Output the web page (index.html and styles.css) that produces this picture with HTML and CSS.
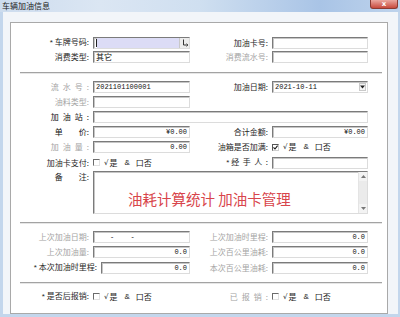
FILE: index.html
```html
<!DOCTYPE html>
<html lang="zh-CN">
<head>
<meta charset="utf-8">
<title>车辆加油信息</title>
<link rel="stylesheet" href="styles.css">
</head>
<body>
<div class="window">
  <div class="titlebar">
    <span class="title">车辆加油信息</span>
    <span class="close">x</span>
  </div>
  <div class="client">
    <div class="panel">
      <div class="rows">
        <div class="row">
          <span class="lbl"><span class="star">*</span> 车牌号码:</span>
          <div class="inp inp-sel"><span class="caret"></span><span class="fill"></span><span class="pick"><svg width="8" height="9" viewBox="0 0 8 9"><path d="M2.5 1.5V7H6.5" fill="none" stroke="#333" stroke-width="1"/><path d="M5.5 5.5L7 7L5.5 8.5" fill="none" stroke="#333" stroke-width="0.8"/></svg></span></div>
          <span class="lbl">加油卡号:</span>
          <div class="inp"></div>
        </div>
        <div class="row">
          <span class="lbl">消费类型:</span>
          <div class="inp cjk">其它</div>
          <span class="lbl dim">消费流水号:</span>
          <div class="inp"></div>
        </div>
      </div>

      <div class="sep sep1"></div>

      <div class="rows">
        <div class="row">
          <span class="lbl dim"><span class="sp4">流水号</span>:</span>
          <div class="inp">2021101100001</div>
          <span class="lbl">加油日期:</span>
          <div class="inp"><span class="grow">2021-10-11</span><span class="drop"><svg width="5" height="4" viewBox="0 0 5 4"><path d="M0 0.5H5L2.5 3.5Z" fill="#222"/></svg></span></div>
        </div>
        <div class="row">
          <span class="lbl dim">油料类型:</span>
          <div class="inp"></div>
        </div>
        <div class="row">
          <span class="lbl strong"><span class="sp4">加油站</span>:</span>
          <div class="inp span3"></div>
        </div>
        <div class="row">
          <span class="lbl strong"><span class="sp16">单</span>价:</span>
          <div class="inp num">¥0.00</div>
          <span class="lbl">合计金额:</span>
          <div class="inp num">¥0.00</div>
        </div>
        <div class="row">
          <span class="lbl dim"><span class="sp4">加油量</span>:</span>
          <div class="inp num">0.00</div>
          <span class="lbl">油箱是否加满:</span>
          <div class="chk"><span class="box on"><svg width="5" height="5" viewBox="0 0 5 5"><path d="M0.5 2.3L2 4L4.6 0.6" fill="none" stroke="#111" stroke-width="1.1"/></svg></span><span class="ck">√</span>是<span class="amp">&amp;</span>口否</div>
        </div>
        <div class="row">
          <span class="lbl">加油卡支付:</span>
          <div class="chk"><span class="box"></span><span class="ck">√</span>是<span class="amp">&amp;</span>口否</div>
          <span class="lbl"><span class="star">*</span> <span class="sp3">经手人</span>:</span>
          <div class="inp"></div>
        </div>
        <div class="row row-memo">
          <span class="lbl lbl-top"><span class="sp16">备</span>注:</span>
          <div class="memo span3">
            <div class="memo-text">油耗计算统计 加油卡管理</div>
            <div class="scroll">
              <span class="sbtn"><svg width="5" height="3" viewBox="0 0 5 3"><path d="M0 3H5L2.5 0Z" fill="#777"/></svg></span>
              <span class="strack"></span>
              <span class="sbtn"><svg width="5" height="3" viewBox="0 0 5 3"><path d="M0 0H5L2.5 3Z" fill="#777"/></svg></span>
            </div>
          </div>
        </div>
      </div>

      <div class="sep sep2"></div>

      <div class="rows">
        <div class="row">
          <span class="lbl dim">上次加油日期:</span>
          <div class="inp"><span class="mask">-&nbsp;&nbsp;-</span></div>
          <span class="lbl dim">上次加油时里程:</span>
          <div class="inp num">0.0</div>
        </div>
        <div class="row">
          <span class="lbl dim">上次加油量:</span>
          <div class="inp num">0.0</div>
          <span class="lbl dim">上次百公里油耗:</span>
          <div class="inp num">0.0</div>
        </div>
        <div class="row">
          <div class="pair">
            <span class="lbl"><span class="star">*</span> 本次加油时里程:</span>
            <div class="inp num">0.0</div>
          </div>
          <span class="lbl dim">本次百公里油耗:</span>
          <div class="inp num">0.0</div>
        </div>
      </div>

      <div class="sep sep3"></div>

      <div class="rows">
        <div class="row">
          <span class="lbl"><span class="star">*</span> 是否后报销:</span>
          <div class="chk"><span class="box"></span><span class="ck">√</span>是<span class="amp">&amp;</span>口否</div>
          <span class="lbl dim"><span class="sp4">已报销</span>:</span>
          <div class="chk"><span class="box"></span><span class="ck">√</span>是<span class="amp">&amp;</span>口否</div>
        </div>
      </div>
    </div>
  </div>
</div>
</body>
</html>
```

FILE: styles.css
```css
* { box-sizing: border-box; margin: 0; padding: 0; }
html, body { width: 400px; height: 317px; overflow: hidden; }
body {
  font-family: "Noto Sans CJK SC", "Noto Sans", sans-serif;
  font-size: 8px;
  color: #222;
  background: #fff;
}
.window {
  width: 400px;
  height: 317px;
  display: flex;
  flex-direction: column;
  background: #c3d6ec;
}
.titlebar {
  height: 12px;
  flex: none;
  display: flex;
  justify-content: space-between;
  align-items: flex-start;
  background: linear-gradient(90deg, #cddcee 0%, #dbe6f3 25%, #cfdff0 50%, #a9c4e6 80%, #bed3ec 100%);
}
.title {
  font-size: 8px;
  line-height: 11px;
  padding-left: 2px;
  color: #1a1a1a;
}
.close {
  width: 28px;
  height: 9px;
  margin-right: 2px;
  background: linear-gradient(#eba79f, #c84a3d);
  border: 1px solid #8c3b33;
  border-top: none;
  border-radius: 0 0 3px 3px;
  color: #fff;
  font: bold 7px/8px "DejaVu Sans", sans-serif;
  text-align: center;
}
.client {
  flex: 1;
  margin: 0 2px 3px 3px;
  background: #f2f5f9;
  padding: 10px 10px 0 7px;
}
.panel {
  width: 378px;
  background: #fff;
  border: 1px solid #a9a9a9;
  padding: 13px 0 11px 0;
}
.rows {
  display: flex;
  flex-direction: column;
  gap: 3px;
}
.row {
  display: grid;
  grid-template-columns: 80px 97px 78px 96px;
  column-gap: 2px;
  height: 12px;
  align-items: center;
}
.row-memo { height: 43px; }
.lbl {
  text-align: right;
  padding-right: 2px;
  white-space: nowrap;
  line-height: 12px;
  color: #262626;
}
.lbl-top { align-self: start; line-height: 11px; }
.strong { color: #111; }
.dim { color: #a4a4a4; }
.star { font-family: "Liberation Sans", sans-serif; font-size: 8px; }
.sp4 { letter-spacing: 4px; }
.sp3 { letter-spacing: 3.5px; }
.sp16 { letter-spacing: 16px; }

.inp {
  height: 12px;
  border: 1px solid;
  border-color: #7b7b7b #dcdcdc #dcdcdc #7b7b7b;
  box-shadow: inset 1px 1px 0 #c6c6c6;
  background: #fff;
  font: 7px/10px "Liberation Mono", monospace;
  color: #111;
  padding: 0 2px;
  display: flex;
  align-items: center;
  overflow: hidden;
  white-space: nowrap;
}
.cjk { font: 8px/10px "Noto Sans CJK SC", sans-serif; }
.num { justify-content: flex-end; }
.span3 { grid-column: 2 / 5; }
.grow { flex: 1; }
.mask { padding-left: 14px; letter-spacing: 0; word-spacing: 4px; }

.inp-sel { padding: 0; background: #fff; }
.caret { width: 1px; height: 8px; background: #222; margin-left: 2px; flex: none; }
.fill { flex: 1; height: 100%; background: #dcdcf6; }
.pick {
  width: 10px;
  height: 100%;
  flex: none;
  background: #ececec;
  border-left: 1px solid #c8c8c8;
  display: flex;
  align-items: center;
  justify-content: center;
}
.drop {
  width: 7px;
  height: 8px;
  flex: none;
  border: 1px solid #c9c9c9;
  background: #f4f4f4;
  display: flex;
  align-items: center;
  justify-content: center;
  margin-right: -1px;
}

.pair {
  grid-column: 1 / 3;
  display: grid;
  grid-template-columns: 1fr 89px;
  column-gap: 3px;
  align-items: center;
}
.pair .lbl { padding-right: 1px; }

.chk {
  display: flex;
  align-items: center;
  height: 12px;
  white-space: nowrap;
  color: #222;
  line-height: 10px;
}
.box {
  width: 7px;
  height: 7px;
  flex: none;
  border: 1px solid;
  border-color: #6b6b6b #e2e2e2 #e2e2e2 #6b6b6b;
  background: #fff;
  margin-right: 4px;
  display: flex;
  align-items: center;
  justify-content: center;
}
.box.on { border-color: #555 #cfcfcf #cfcfcf #555; }
.ck { font: 7px/10px "DejaVu Sans", sans-serif; margin-right: 1px; }
.amp { font: 8px/10px "Liberation Sans", sans-serif; margin: 0 6px 0 7px; }

.memo {
  height: 43px;
  align-self: start;
  border: 1px solid;
  border-color: #7b7b7b #dcdcdc #dcdcdc #7b7b7b;
  box-shadow: inset 1px 1px 0 #c6c6c6;
  background: #fff;
  display: flex;
}
.memo-text {
  flex: 1;
  padding: 20px 0 0 34px;
  font: 14.5px/14px "Noto Sans CJK SC", sans-serif;
  color: #d8454b;
  white-space: nowrap;
}
.scroll {
  width: 9px;
  flex: none;
  display: flex;
  flex-direction: column;
  background: #eeeeee;
  border-left: 1px solid #e4e4e4;
}
.sbtn {
  height: 9px;
  flex: none;
  display: flex;
  align-items: center;
  justify-content: center;
  background: #f3f3f3;
}
.strack { flex: 1; background: #ebebeb; }

.sep {
  height: 2px;
  margin: 9px 5px 7px 9px;
  border-top: 1px solid #a3a3a3;
  border-bottom: 1px solid #e6e6e6;
}
.sep2 { margin-top: 8px; }
.sep3 { margin-bottom: 6px; }
```
